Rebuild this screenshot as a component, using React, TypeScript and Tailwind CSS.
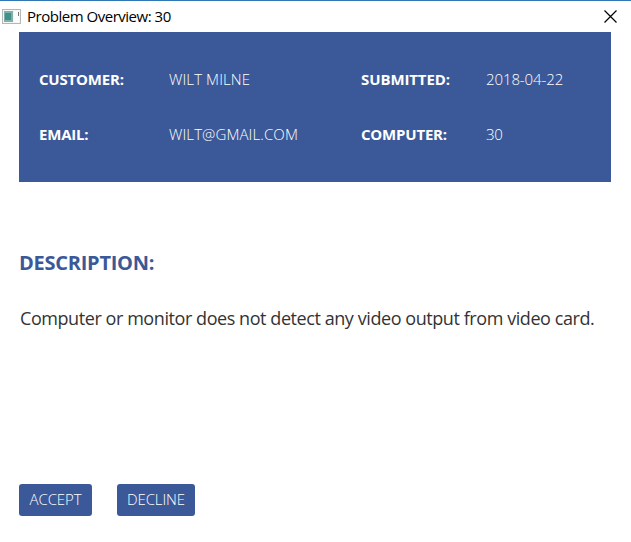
const fields = [
  { label: "CUSTOMER:", value: "WILT MILNE", labelClass: "tracking-[-0.2px]", valueClass: "tracking-[0.1px]" },
  { label: "SUBMITTED:", value: "2018-04-22", labelClass: "tracking-[-0.1px]", valueClass: "tracking-[-0.1px]" },
  { label: "EMAIL:", value: "WILT@GMAIL.COM", labelClass: "tracking-[-0.2px]", valueClass: "tracking-[0.1px]" },
  { label: "COMPUTER:", value: "30", labelClass: "tracking-[-0.2px]", valueClass: "tracking-[-0.3px]" },
];

function AppIcon() {
  return (
    <svg width="19" height="15" viewBox="0 0 19 15" className="shrink-0">
      <rect x="0.5" y="0.5" width="18" height="14" fill="#f4f5f5" stroke="#b4b8ba" />
      <rect x="2" y="2" width="9" height="11" fill="#7fb0ab" />
      <rect x="3" y="4" width="6" height="7" fill="#43908a" />
      <rect x="12" y="2" width="5" height="11" fill="#fdfdfd" />
      <rect x="16" y="3" width="1" height="4" fill="#74797d" />
    </svg>
  );
}

export default function App() {
  return (
    <div className="flex h-[542px] w-[631px] flex-col overflow-hidden border-t border-[#2f77b5] bg-white font-['Open_Sans',sans-serif] whitespace-nowrap">
      <header className="flex h-[31px] items-center pr-[14px] pl-[2px]">
        <AppIcon />
        <h1 className="ml-[6px] pb-0.5 text-[15px] leading-5 tracking-[-0.48px] text-black">Problem Overview: 30</h1>
        <button aria-label="Close" className="ml-auto">
          <svg width="13" height="13" viewBox="0 0 13 13" stroke="#000" strokeWidth="1.2">
            <path d="M0.5 0.5 12.5 12.5M12.5 0.5 0.5 12.5" />
          </svg>
        </button>
      </header>
      <main className="px-[19px]">
        <dl className="grid h-[150px] w-[592px] grid-cols-[322px_1fr] content-start bg-[#3b5998] pt-5 pl-5 text-[15px] text-white">
          {fields.map((f) => (
            <div key={f.label} className="flex h-[55px] pt-[17px] leading-5 odd:[&>dt]:w-[130px] even:[&>dt]:w-[125px]">
              <dt className="shrink-0 font-bold">
                <span className={f.labelClass}>{f.label}</span>
              </dt>
              <dd className="font-light">
                <span className={f.valueClass}>{f.value}</span>
              </dd>
            </div>
          ))}
        </dl>
        <h2 className="mt-[67px] text-[20px] leading-7 font-bold tracking-[-0.25px] text-[#3b5998]">DESCRIPTION:</h2>
        <p className="mt-[27px] ml-px text-[18px] leading-7 tracking-[-0.43px] text-[#333]">
          Computer or monitor does not detect any video output from video card.
        </p>
        <div className="mt-[152px] flex gap-[25px] text-[15px] font-light text-white">
          <button className="h-8 w-[73px] rounded-[3px] bg-[#3b5998] pb-0.5 tracking-[-0.1px]">ACCEPT</button>
          <button className="h-8 w-[78px] rounded-[3px] bg-[#3b5998] pb-0.5 tracking-[-0.1px]">DECLINE</button>
        </div>
      </main>
    </div>
  );
}
